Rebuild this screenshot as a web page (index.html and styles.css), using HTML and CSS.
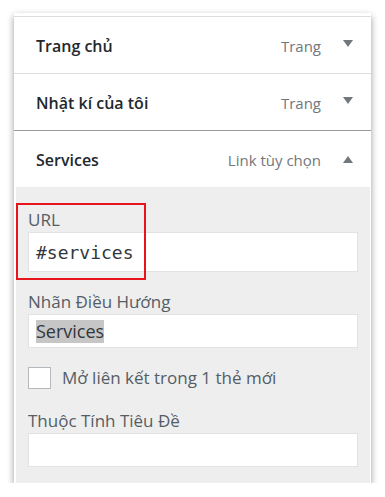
FILE: index.html
```
<!DOCTYPE html>
<html lang="vi">
<head>
  <meta charset="UTF-8" />
  <meta name="viewport" content="width=device-width, initial-scale=1" />
  <title>Menu</title>
  <link rel="stylesheet" href="styles.css">
</head>
<body>
  <div class="panel">
    <div class="panel-top"></div>

    <div class="item">
      <span class="item-title">Trang chủ</span>
      <span class="item-type">Trang</span>
      <span class="arrow down"></span>
    </div>

    <div class="item item-before-open">
      <span class="item-title">Nhật kí của tôi</span>
      <span class="item-type">Trang</span>
      <span class="arrow down"></span>
    </div>

    <div class="item item-open">
      <span class="item-title">Services</span>
      <span class="item-type">Link tùy chọn</span>
      <span class="arrow up"></span>
    </div>

    <div class="settings">
      <div class="highlight-box"></div>

      <label class="field-label">URL</label>
      <div class="field field-url">#services</div>

      <label class="field-label">Nhãn Điều Hướng</label>
      <div class="field"><span class="selected">Services</span></div>

      <div class="check-row">
        <span class="checkbox"></span>
        <span class="check-label">Mở liên kết trong 1 thẻ mới</span>
      </div>

      <label class="field-label">Thuộc Tính Tiêu Đề</label>
      <div class="field"></div>
    </div>
  </div>
</body>
</html>
```

FILE: styles.css
```
body {
  margin: 0;
  background: #fff;
  font-family: 'Open Sans', 'Noto Sans', sans-serif;
}

.panel {
  position: relative;
  margin: 13px 0 0 14px;
  width: 357px;
  background: #fff;
  box-shadow: 0 3px 7px rgba(0,0,0,0.4);
}

.panel-top {
  height: 3px;
  border-bottom: 1px solid #ddd;
}

.item {
  display: flex;
  align-items: center;
  height: 57px;
  padding: 2px 18px 0 22px;
  box-sizing: border-box;
  border-bottom: 1px solid #ddd;
}

.item-before-open {
  border-bottom-color: #999;
}

.item-open {
  height: 56px;
  border-bottom: none;
}

.item-title {
  flex: 1;
  font-size: 16px;
  font-weight: 600;
  color: #23282d;
}

.item-type {
  font-size: 15px;
  color: #72777c;
  margin-right: 22px;
}

.arrow {
  width: 0;
  height: 0;
  border-left: 5px solid transparent;
  border-right: 5px solid transparent;
}

.arrow.down {
  border-top: 7px solid #72777c;
  margin-top: -6px;
}

.arrow.up {
  border-bottom: 7px solid #72777c;
  margin-top: -2px;
}

.settings {
  position: relative;
  background: #eee;
  padding: 23px 12px 16px 12px;
  margin: 0 1px 0 2px;
}

.highlight-box {
  position: absolute;
  left: 0;
  top: 16px;
  width: 126px;
  height: 73px;
  border: 2px solid #e8141b;
}

.field-label {
  display: block;
  font-size: 17px;
  line-height: 20px;
  color: #555d66;
  margin-bottom: 2px;
}

.field {
  box-sizing: border-box;
  height: 34px;
  background: #fff;
  border: 1px solid #e2e2e2;
  padding: 0 7px;
  display: flex;
  align-items: center;
  font-size: 18px;
  color: #32373c;
  margin-bottom: 20px;
}

.field:last-child {
  margin-bottom: 0;
}

.field-url {
  height: 40px;
  font-family: 'DejaVu Sans Mono', monospace;
  font-size: 18px;
  color: #32373c;
}

.selected {
  background: #c6c6c6;
  line-height: 23px;
}

.check-row {
  display: flex;
  align-items: center;
  margin: -1px 0 22px;
}

.checkbox {
  box-sizing: border-box;
  width: 23px;
  height: 22px;
  background: #fff;
  border: 1px solid #b4b9be;
  margin-right: 11px;
}

.check-label {
  font-size: 17px;
  line-height: 22px;
  color: #555d66;
}
```
